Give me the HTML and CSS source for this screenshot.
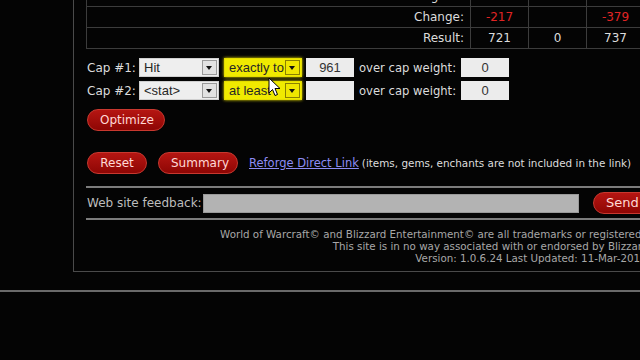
FILE: index.html
```html
<!DOCTYPE html>
<html lang="en">
<head>
    <meta charset="UTF-8">
    <meta name="viewport" content="width=device-width, initial-scale=1.0">
    <title>Reforge Optimizer</title>
    <link rel="stylesheet" href="styles.css">
</head>
<body>
    <div class="page">
        <div class="panel">
            <table class="stats">
                <colgroup>
                    <col class="col-label">
                    <col class="col-val">
                    <col class="col-val">
                    <col class="col-val">
                </colgroup>
                <tr>
                    <td class="label">Original:</td>
                    <td class="neg">938</td>
                    <td>0</td>
                    <td class="neg">1116</td>
                </tr>
                <tr>
                    <td class="label">Change:</td>
                    <td class="neg">-217</td>
                    <td></td>
                    <td class="neg">-379</td>
                </tr>
                <tr>
                    <td class="label">Result:</td>
                    <td>721</td>
                    <td>0</td>
                    <td>737</td>
                </tr>
            </table>

            <div class="caps">
                <div class="cap-row">
                    <span class="cap-label">Cap #1:</span>
                    <span class="select stat">Hit<i class="arrow"></i></span>
                    <span class="select mode">exactly to<i class="arrow"></i></span>
                    <span class="field">961</span>
                    <span class="weight-label">over cap weight:</span>
                    <span class="field">0</span>
                </div>
                <div class="cap-row">
                    <span class="cap-label">Cap #2:</span>
                    <span class="select stat">&lt;stat&gt;<i class="arrow"></i></span>
                    <span class="select mode">at least<i class="arrow"></i></span>
                    <span class="field"></span>
                    <span class="weight-label">over cap weight:</span>
                    <span class="field">0</span>
                </div>
            </div>

            <div class="optimize">
                <button class="btn">Optimize</button>
            </div>

            <div class="actions">
                <button class="btn">Reset</button>
                <button class="btn">Summary</button>
                <a class="direct-link" href="#">Reforge Direct Link</a>
                <span class="note">(items, gems, enchants are not included in the link)</span>
            </div>

            <div class="feedback">
                <span class="feedback-label">Web site feedback:</span>
                <span class="feedback-input"></span>
                <button class="btn send">Send</button>
            </div>

            <div class="footer">
                <p>World of Warcraft&copy; and Blizzard Entertainment&copy; are all trademarks or registered trademarks of Blizzard Entertainment.</p>
                <p>This site is in no way associated with or endorsed by Blizzard Entertainment.</p>
                <p>Version: 1.0.6.24 Last Updated: 11-Mar-2011</p>
            </div>
        </div>
        <div class="rule"></div>
    </div>

    <svg class="pointer" width="14" height="21" viewBox="0 0 14 21">
        <path d="M1 1 L1 16 L4.5 12.5 L7 18.5 L9.5 17.5 L7 11.5 L12 11.5 Z" fill="#fff" stroke="#000" stroke-width="1"/>
    </svg>
</body>
</html>
```

FILE: styles.css
```css
body {
    margin: 0;
    width: 640px;
    height: 360px;
    overflow: hidden;
    background: #040404;
    font-family: "DejaVu Sans", Verdana, sans-serif;
    font-size: 12px;
    color: #dcdcdc;
    position: relative;
}
.page {
    margin-top: -15px;
    width: 1100px;
}
.panel {
    margin-left: 73px;
    width: 890px;
    border-left: 1px solid #4a4a4a;
    border-bottom: 1px solid #4a4a4a;
    padding: 0 14px 7px 12px;
}
.stats {
    border-collapse: collapse;
    table-layout: fixed;
    width: 558px;
}
.col-label {
    width: 384px;
}
.col-val {
    width: 58px;
}
.stats td {
    border: 1px solid #3c3c3c;
    height: 20px;
    padding: 0;
    text-align: center;
    white-space: nowrap;
}
.stats td.label {
    text-align: right;
    padding-right: 6px;
}
.stats td.neg {
    color: #e02424;
}
.caps {
    margin-top: 9px;
    display: flex;
    flex-direction: column;
    gap: 4px;
}
.cap-row {
    display: flex;
    align-items: center;
    height: 19px;
    padding-left: 1px;
}
.cap-row > span {
    flex-shrink: 0;
    white-space: nowrap;
}
.cap-label {
    width: 52px;
}
.select {
    position: relative;
    height: 19px;
    box-sizing: border-box;
    background: #eeeeee;
    border: 1px solid #cfcfcf;
    color: #262626;
    font-family: "Liberation Sans", Arial, sans-serif;
    font-size: 13px;
    line-height: 17px;
    padding-left: 4px;
}
.select.stat {
    width: 80px;
}
.select.mode {
    width: 78px;
    margin-left: 5px;
    background: #f0ea00;
    border-color: #e4dc00;
    box-shadow: 0 0 3px #eee400;
}
.arrow {
    position: absolute;
    right: 1px;
    top: 1px;
    width: 13px;
    height: 13px;
    border: 1px solid #9a9a9a;
    background: #e2e2e2;
}
.arrow::after {
    content: "";
    position: absolute;
    left: 3px;
    top: 5px;
    border-left: 3.5px solid transparent;
    border-right: 3.5px solid transparent;
    border-top: 4px solid #111;
}
.mode .arrow {
    background: #efe600;
    border-color: #8a8000;
}
.field {
    width: 48px;
    height: 19px;
    box-sizing: border-box;
    background: #ececec;
    color: #333;
    font-family: "Liberation Sans", Arial, sans-serif;
    font-size: 13px;
    line-height: 19px;
    text-align: center;
    margin-left: 4px;
}
.weight-label {
    margin-left: 5px;
    width: 98px;
    font-size: 11.6px;
}
.btn {
    height: 22px;
    box-sizing: border-box;
    padding: 0 12px;
    border: 1px solid #c8382f;
    border-radius: 11px;
    background: linear-gradient(#b51612, #8e0604);
    color: #ffd9d6;
    font-family: "DejaVu Sans", Verdana, sans-serif;
    font-size: 12px;
    line-height: 20px;
}
.optimize {
    margin-top: 9px;
    padding-left: 1px;
}
.optimize .btn {
    width: 78px;
}
.actions {
    margin-top: 21px;
    padding-left: 1px;
    display: flex;
    align-items: center;
    gap: 11px;
    padding-bottom: 12px;
    border-bottom: 2px solid #7c7c7c;
}
.actions .btn:first-child {
    width: 60px;
}
.actions .btn:nth-child(2) {
    width: 80px;
}
.direct-link {
    color: #8d8cf4;
    font-size: 11.5px;
}
.note {
    margin-left: -8px;
    font-size: 10.4px;
    color: #dedede;
    white-space: nowrap;
}
.feedback {
    display: flex;
    align-items: center;
    padding: 4px 0 4px 1px;
    border-bottom: 2px solid #7c7c7c;
}
.feedback-label {
    width: 116px;
    color: #bdbdbd;
}
.feedback-input {
    width: 376px;
    height: 19px;
    box-sizing: border-box;
    background: #b3b3b3;
    border: 1px solid #999;
}
.btn.send {
    margin-left: 14px;
    width: 70px;
    text-align: left;
    font-size: 13px;
}
.footer {
    margin-top: 9px;
    text-align: center;
    font-size: 10.3px;
    line-height: 11.8px;
    color: #a8a8a8;
    white-space: nowrap;
}
.footer p {
    margin: 0;
}
.rule {
    margin-top: 18px;
    height: 2px;
    background: #6a6a6a;
}
.pointer {
    position: absolute;
    left: 268px;
    top: 77px;
}
```
